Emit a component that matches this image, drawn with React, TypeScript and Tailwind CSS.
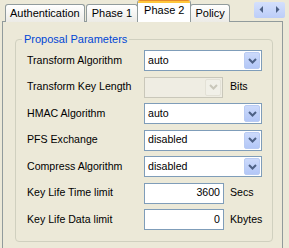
import React from "react";

const font = { fontFamily: '"Liberation Sans", Arial, sans-serif' };

function Chevron({ disabled }: { disabled?: boolean }) {
  return (
    <svg width="9" height="6" viewBox="0 0 9 6">
      <path d="M1 1 L4.5 4.5 L8 1" fill="none" stroke={disabled ? "#C9C7BA" : "#4D6185"} strokeWidth="2" />
    </svg>
  );
}

function Combo({ value, width, disabled }: { value: string; width: string; disabled?: boolean }) {
  return (
    <div
      className={`flex h-[21px] items-stretch border ${width} ${
        disabled ? "border-[#C9C7BA] bg-[#EFEDE3]" : "border-[#7F9DB9] bg-white"
      }`}
    >
      <div className="flex flex-1 items-center pl-[3px] text-black">{value}</div>
      <div
        className={`m-px flex w-[16px] items-center justify-center rounded-[2px] border ${
          disabled
            ? "border-[#E3E1D6] bg-[#F1F0E8]"
            : "border-[#B9CBF3] bg-gradient-to-b from-[#CCDAFB] to-[#B3C7F7]"
        }`}
      >
        <Chevron disabled={disabled} />
      </div>
    </div>
  );
}

function NumField({ value }: { value: string }) {
  return (
    <div className="flex h-[21px] w-[80px] items-center justify-end border border-[#7F9DB9] bg-white pr-[3px] text-black">
      {value}
    </div>
  );
}

function Tab({ label, active, pad }: { label: string; active?: boolean; pad?: string }) {
  if (active) {
    return (
      <div className="relative z-10 -mx-px flex h-[22px] flex-col overflow-hidden rounded-t-[3px] border-x border-[#919B9C] bg-white">
        <div className="h-[1px] bg-[#E68B2C]" />
        <div className="h-[2px] bg-[#FFC73C]" />
        <div className="px-[6px] pt-[1px] leading-[13px]">{label}</div>
      </div>
    );
  }
  return (
    <div
      className={`flex h-[18px] items-start rounded-t-[3px] border border-b-0 border-[#919B9C] bg-gradient-to-b from-white to-[#ECEBE6] pt-[2px] leading-[13px] ${
        pad ?? "px-[4px]"
      }`}
    >
      {label}
    </div>
  );
}

export default function App() {
  return (
    <div
      className="relative h-[248px] w-[289px] overflow-hidden bg-[#ECE9D8] text-[10.6px] text-black"
      style={font}
    >
      <div className="flex h-[22px] items-end pl-[5px] pr-[4px] text-[11px]">
        <Tab label="Authentication" />
        <div className="w-[1px]" />
        <Tab label="Phase 1" pad="px-[5px]" />
        <Tab label="Phase 2" active />
        <Tab label="Policy" />
        <div className="ml-auto mb-[3px] flex h-[16px] w-[31px] self-center rounded-[2px] bg-gradient-to-b from-[#D4E0FC] to-[#BCCDF8]">
          <div className="flex flex-1 items-center justify-center">
            <svg width="5" height="7" viewBox="0 0 5 7">
              <path d="M4 0 L0.5 3.5 L4 7 Z" fill="#4D6185" />
            </svg>
          </div>
          <div className="flex flex-1 items-center justify-center">
            <svg width="5" height="7" viewBox="0 0 5 7">
              <path d="M1 0 L4.5 3.5 L1 7 Z" fill="#4D6185" />
            </svg>
          </div>
        </div>
      </div>

      <div className="-mt-px ml-[2px] h-[250px] w-[281px] border border-[#919B9C] bg-[#ECE9D8] px-[12px] pt-[11px]">
        <fieldset className="h-[209px] w-[258px] rounded-[4px] border border-[#D0D0BF] pl-[6px]">
          <legend className="px-[2px] text-[11px] leading-[13px] text-[#0046D5]">Proposal Parameters</legend>
          <div className="ml-[5px] mt-[4px] grid grid-cols-[117px_auto] items-center gap-y-[5.5px]">
            <div>Transform Algorithm</div>
            <Combo value="auto" width="w-[118px]" />

            <div>Transform Key Length</div>
            <div className="flex items-center gap-[7px]">
              <Combo value="" width="w-[79px]" disabled />
              <span>Bits</span>
            </div>

            <div>HMAC Algorithm</div>
            <Combo value="auto" width="w-[118px]" />

            <div>PFS Exchange</div>
            <Combo value="disabled" width="w-[118px]" />

            <div>Compress Algorithm</div>
            <Combo value="disabled" width="w-[118px]" />

            <div>Key Life Time limit</div>
            <div className="flex items-center gap-[6px]">
              <NumField value="3600" />
              <span>Secs</span>
            </div>

            <div>Key Life Data limit</div>
            <div className="flex items-center gap-[6px]">
              <NumField value="0" />
              <span>Kbytes</span>
            </div>
          </div>
        </fieldset>
      </div>
    </div>
  );
}
